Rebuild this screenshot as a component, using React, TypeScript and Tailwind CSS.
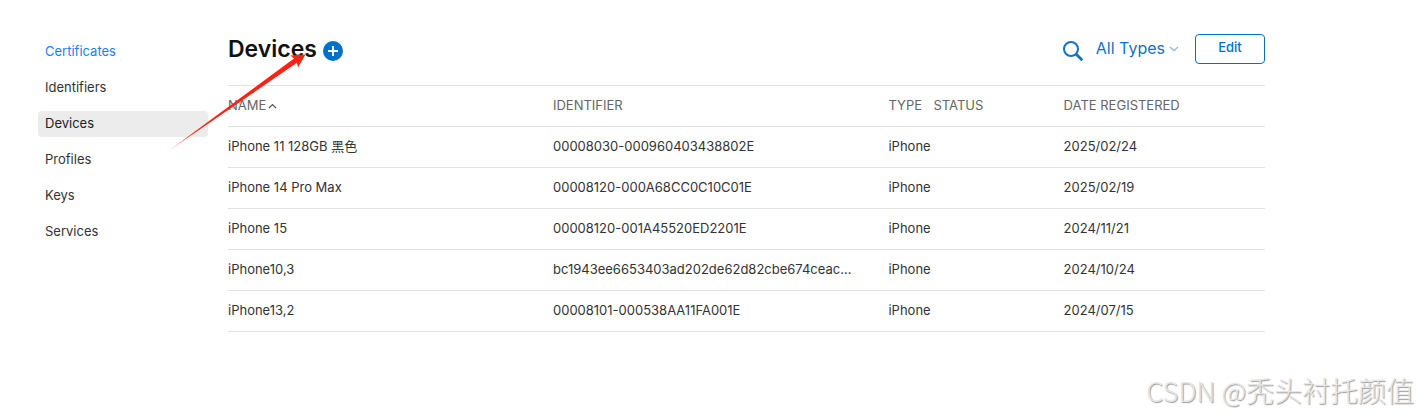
const navItems = ['Certificates', 'Identifiers', 'Devices', 'Profiles', 'Keys', 'Services'];

const devices = [
  { name: 'iPhone 11 128GB 黑色', id: '00008030-000960403438802E', date: '2025/02/24' },
  { name: 'iPhone 14 Pro Max', id: '00008120-000A68CC0C10C01E', date: '2025/02/19' },
  { name: 'iPhone 15', id: '00008120-001A45520ED2201E', date: '2024/11/21' },
  { name: 'iPhone10,3', id: 'bc1943ee6653403ad202de62d82cbe674ceac...', date: '2024/10/24' },
  { name: 'iPhone13,2', id: '00008101-000538AA11FA001E', date: '2024/07/15' },
];

function navClass(item: string) {
  const base = 'block h-[26px] rounded px-[7px] text-[13px] leading-6';
  if (item === 'Devices') return `${base} bg-[#ececec] text-[#222]`;
  if (item === 'Certificates') return `${base} text-[#1a7ff0]`;
  return `${base} text-[#333]`;
}

export default function App() {
  return (
    <div className="relative flex min-h-screen flex-col bg-white font-['Inter','Noto_Sans_CJK_SC',sans-serif] text-[13px] text-[#333]">
      <div className="flex flex-1 gap-5 pr-[153px] pl-[38px]">
        <nav aria-label="Resources" className="w-[170px] shrink-0 pt-[39px]">
          <ul className="flex flex-col gap-2.5">
            {navItems.map((item) => (
              <li key={item}>
                <a href="#" className={navClass(item)} aria-current={item === 'Devices' ? 'page' : undefined}>
                  {item}
                </a>
              </li>
            ))}
          </ul>
        </nav>

        <main className="min-w-0 flex-1">
          <header className="flex h-[85px] items-start justify-between pt-[34px]">
            <div className="flex items-center gap-1.5">
              <h1 className="text-[23px] leading-[30px] font-semibold text-[#111]">Devices</h1>
              <button type="button" aria-label="Register a device" className="mt-1">
                <svg width="20" height="20" viewBox="0 0 20 20" aria-hidden="true">
                  <circle cx="10" cy="10" r="10" fill="#0070c9" />
                  <path d="M10 5v10M5 10h10" stroke="#fff" strokeWidth="2" />
                </svg>
              </button>
            </div>
            <div className="flex items-start text-[#0070c9]">
              <button type="button" aria-label="Search" className="mt-1.5 mr-3">
                <svg width="22" height="22" viewBox="0 0 22 22" fill="none" stroke="#1671c4" aria-hidden="true">
                  <circle cx="9" cy="9" r="7" strokeWidth="2" />
                  <path d="M14 14l6.3 6.3" strokeWidth="2.8" />
                </svg>
              </button>
              <button type="button" className="mr-4 flex items-center gap-1 text-[16px] leading-7 text-[#1671c4]">
                All Types
                <svg className="mt-0.5" width="10" height="6" viewBox="0 0 10 6" fill="none" stroke="#8bbce6" strokeWidth="1.3" aria-hidden="true">
                  <path d="M1 1l4 3.6L9 1" />
                </svg>
              </button>
              <button type="button" className="h-[30px] w-[70px] rounded border border-[#0070c9] pb-1 text-[13px] leading-6 font-medium">
                Edit
              </button>
            </div>
          </header>

          <table className="w-full table-fixed border-collapse text-left">
            <colgroup>
              <col className="w-[31.34%]" />
              <col className="w-[32.35%]" />
              <col className="w-[4.34%]" />
              <col className="w-[12.55%]" />
              <col />
            </colgroup>
            <thead>
              <tr className="h-[41px] border-y border-[#e3e3e3] text-[#666]">
                <th className="p-0 font-normal" aria-sort="ascending">
                  <button type="button" className="flex items-center gap-0.5">
                    NAME
                    <svg width="9" height="6" viewBox="0 0 9 6" fill="none" stroke="#555" strokeWidth="1.2" aria-hidden="true">
                      <path d="M1 5l3.5-3.4L8 5" />
                    </svg>
                  </button>
                </th>
                <th className="p-0 font-normal">IDENTIFIER</th>
                <th className="p-0 font-normal">TYPE</th>
                <th className="p-0 font-normal">STATUS</th>
                <th className="p-0 font-normal">DATE REGISTERED</th>
              </tr>
            </thead>
            <tbody>
              {devices.map((device) => (
                <tr key={device.id} className="h-[41px] border-b border-[#e3e3e3]">
                  <td className="p-0">{device.name}</td>
                  <td className="p-0">{device.id}</td>
                  <td className="p-0 whitespace-nowrap">iPhone</td>
                  <td className="p-0" />
                  <td className="p-0">{device.date}</td>
                </tr>
              ))}
            </tbody>
          </table>
        </main>
      </div>

      <svg className="pointer-events-none absolute top-[53px] left-[168px]" width="140" height="99" viewBox="0 0 140 99" aria-hidden="true">
        <defs>
          <linearGradient id="arrow-fade" x1="0" x2="1" y1="1" y2="0">
            <stop offset="0" stopColor="#fb2313" stopOpacity="0.5" />
            <stop offset="0.2" stopColor="#fb2313" />
          </linearGradient>
        </defs>
        <path fill="url(#arrow-fade)" d="M1 97.5L126 5.5L122.5 2.5L137.5 1.5L130 14.5L129 9.8Z" />
      </svg>

      <p className="pointer-events-none absolute right-1 bottom-1.5 font-['Noto_Sans_CJK_SC',sans-serif] text-[28px] leading-10 font-light whitespace-nowrap text-[#e6e6e6] [text-shadow:1px_1px_1px_#999]">
        <span className="text-[27px]">CSDN @</span>秃头衬托颜值
      </p>
    </div>
  );
}
